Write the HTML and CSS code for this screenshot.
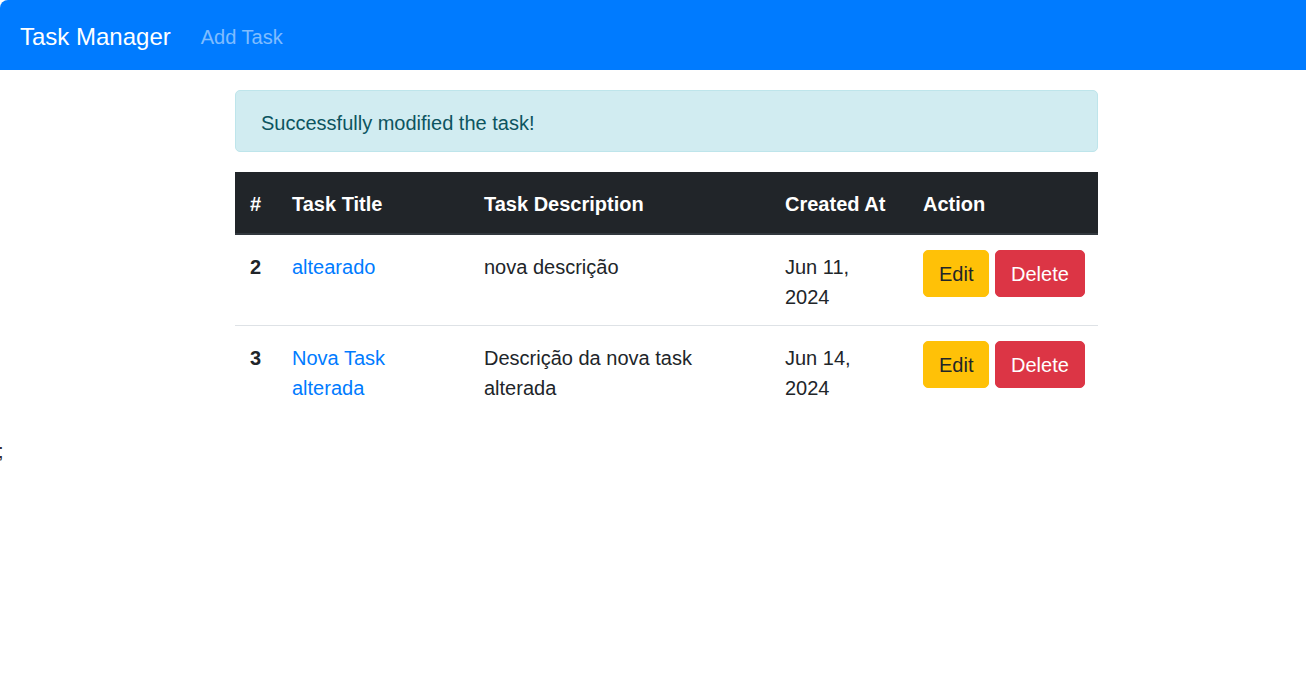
FILE: index.html
```html
<!DOCTYPE html>
<html lang="en">
<head>
<meta charset="utf-8">
<title>Task Manager</title>
<link rel="stylesheet" href="styles.css">
</head>
<body>
<nav class="navbar">
  <a class="brand" href="#">Task Manager</a>
  <a class="nav-link" href="#">Add Task</a>
</nav>
<main class="container">
  <div class="alert">Successfully modified the task!</div>
  <table class="table">
    <colgroup>
      <col class="c-id"><col class="c-title"><col class="c-desc"><col class="c-date"><col class="c-action">
    </colgroup>
    <thead>
      <tr>
        <th>#</th>
        <th>Task Title</th>
        <th>Task Description</th>
        <th>Created At</th>
        <th>Action</th>
      </tr>
    </thead>
    <tbody>
      <tr>
        <th>2</th>
        <td><a href="#">altearado</a></td>
        <td>nova descrição</td>
        <td>Jun 11, 2024</td>
        <td class="actions"><a class="btn btn-warning" href="#">Edit</a> <a class="btn btn-danger" href="#">Delete</a></td>
      </tr>
      <tr>
        <th>3</th>
        <td><a href="#">Nova Task alterada</a></td>
        <td>Descrição da nova task alterada</td>
        <td>Jun 14, 2024</td>
        <td class="actions"><a class="btn btn-warning" href="#">Edit</a> <a class="btn btn-danger" href="#">Delete</a></td>
      </tr>
    </tbody>
  </table>
</main>
<div class="stray">;</div>
</body>
</html>
```
FILE: styles.css
```css
* { box-sizing: border-box; }
html, body { margin: 0; padding: 0; }
body {
  font-family: "Liberation Sans", Arial, sans-serif;
  font-size: 20px;
  line-height: 30px;
  color: #212529;
  background: #fff;
}
a { text-decoration: none; color: #007bff; }

.navbar {
  display: flex;
  align-items: center;
  height: 70px;
  padding: 10px 20px;
  background: #007bff;
  border-top-left-radius: 8px;
}
.brand {
  color: #fff;
  font-size: 24px;
  line-height: 37.5px;
  margin-right: 20px;
  padding: 10px 0 6px;
}
.nav-link {
  color: rgba(255, 255, 255, 0.5);
  padding: 12px 10px 8px;
}

.container {
  width: 863px;
  margin: 20px 0 0 235px;
}
.alert {
  padding: 17px 25px 13px;
  background: #d1ecf1;
  border: 1px solid #bee5eb;
  color: #0c5460;
  border-radius: 5px;
  margin-bottom: 20px;
}

.table {
  width: 100%;
  border-collapse: collapse;
  table-layout: fixed;
  margin-bottom: 20px;
}
.c-id { width: 42px; }
.c-title { width: 192px; }
.c-desc { width: 301px; }
.c-date { width: 138px; }
.c-action { width: 190px; }
.table th, .table td {
  padding: 17px 15px 13px;
  text-align: left;
  vertical-align: top;
}
.table thead th {
  background: #212529;
  color: #fff;
  font-weight: bold;
  padding-bottom: 14px;
  border-bottom: 2px solid #32383e;
}
.table tbody tr + tr th, .table tbody tr + tr td {
  border-top: 1px solid #dee2e6;
}
.table tbody th { font-weight: bold; }
.table .actions { white-space: nowrap; padding-top: 15px; padding-bottom: 15px; }

.btn {
  display: inline-block;
  padding: 7.5px 15px;
  font-size: 20px;
  line-height: 30px;
  border: 1px solid transparent;
  border-radius: 5px;
  vertical-align: top;
}
.btn-warning { background: #ffc107; border-color: #ffc107; color: #212529; }
.btn-danger { background: #dc3545; border-color: #dc3545; color: #fff; }

.stray { margin-left: -2px; }
```
